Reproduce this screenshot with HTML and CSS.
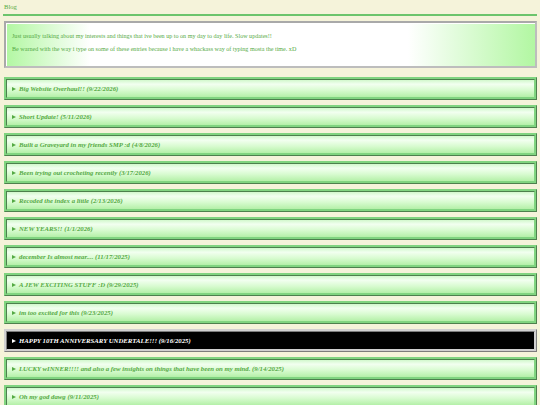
FILE: index.html
```html
<!DOCTYPE html>
<html>
<head>
<meta charset="utf-8">
<title>Blog</title>
<link rel="stylesheet" href="styles.css">
</head>
<body>
<div class="title">Blog</div>
<hr class="rule">
<div class="intro">
  <p>Just usually talking about my interests and things that ive been up to on my day to day life. Slow updates!!</p>
  <p>Be warned with the way i type on some of these entries because i have a whackass way of typing mosta the time. xD</p>
</div>
<div class="entries">
  <details class="entry"><summary>Big Website Overhaul!! (9/22/2026)</summary></details>
  <details class="entry"><summary>Short Update! (5/11/2026)</summary></details>
  <details class="entry"><summary>Built a Graveyard in my friends SMP :d (4/8/2026)</summary></details>
  <details class="entry"><summary>Been trying out crocheting recently (3/17/2026)</summary></details>
  <details class="entry"><summary>Recoded the index a little (2/13/2026)</summary></details>
  <details class="entry"><summary>NEW YEARS!! (1/1/2026)</summary></details>
  <details class="entry"><summary>december Is almost near.... (11/17/2025)</summary></details>
  <details class="entry"><summary>A JEW EXCITING STUFF :D (9/29/2025)</summary></details>
  <details class="entry"><summary>im too excited for this (9/23/2025)</summary></details>
  <details class="entry dark"><summary>HAPPY 10TH ANNIVERSARY UNDERTALE!!! (9/16/2025)</summary></details>
  <details class="entry"><summary>LUCKY wINNER!!!! and also a few insights on things that have been on my mind. (9/14/2025)</summary></details>
  <details class="entry"><summary>Oh my god dawg (9/11/2025)</summary></details>
</div>
</body>
</html>
```
FILE: styles.css
```css
html, body {
  background: #f5f3da;
}
body {
  margin: 3px 3px;
  font-family: "Liberation Serif", "DejaVu Serif", serif;
  font-size: 6.75px;
  color: #55aa44;
}
.title {
  padding: 0 1px;
  line-height: 8px;
  font-size: 6.6px;
}
.rule {
  margin: 3px 0 5px;
  border: none;
  height: 2px;
  background: #6cc46c;
}
.intro {
  border: 2px solid #a9a9a9;
  border-right-color: #bdbdbd;
  border-bottom-color: #bdbdbd;
  box-shadow: inset 1px 1px 0 #ffffff;
  padding: 4px 4px 7px 6px;
  margin: 0 0 9px 1px;
  font-size: 6.1px;
  background: linear-gradient(to right, #b2f7a2 0%, #ffffff 16%, #ffffff 76%, #b2f7a2 100%);
}
.intro p {
  margin: 6px 0;
  line-height: 7px;
}
.entries {
  display: flex;
  flex-direction: column;
  gap: 5px;
}
.entry {
  margin-left: 1px;
  border: 3px ridge #80d480;
  background: linear-gradient(to bottom, #d2f8cc 0%, #f2fff0 25%, #d8fbd0 60%, #b4f0a8 100%);
}
.entry summary {
  list-style: none;
  display: flex;
  align-items: center;
  gap: 3px;
  padding: 4px 5px;
  line-height: 9px;
  font-weight: bold;
  font-style: italic;
  color: #55aa44;
  cursor: pointer;
}
.entry summary::-webkit-details-marker {
  display: none;
}
.entry summary::before {
  content: "";
  width: 0;
  height: 0;
  border-top: 2.5px solid transparent;
  border-bottom: 2.5px solid transparent;
  border-left: 4px solid currentColor;
}
.entry.dark {
  border: 3px ridge #d0d0d0;
  background: #000000;
}
.entry.dark summary {
  color: #ffffff;
}
```
